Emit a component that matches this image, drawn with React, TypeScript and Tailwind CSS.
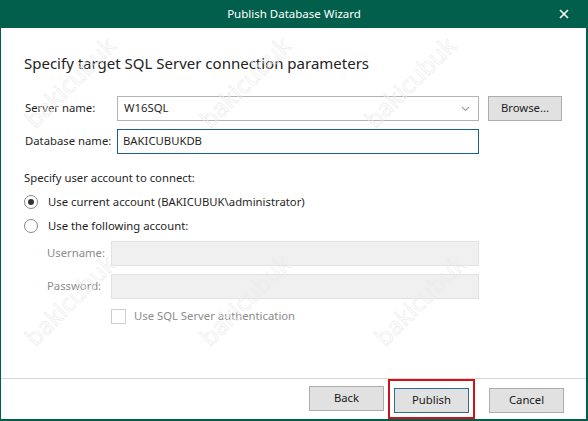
import type { FC } from 'react'

const font = { fontFamily: '"Segoe UI", "Noto Sans", sans-serif' }

/** Faint diagonal watermark positions (center points) */
const marks = [
  [70, 82], [245, 82], [410, 82],
  [70, 300], [245, 300], [420, 300],
]

const Watermark: FC<{ x: number, y: number }> = ({ x, y }) => (
  <span
    className="pointer-events-none absolute -translate-x-1/2 -translate-y-1/2 -rotate-45 select-none whitespace-nowrap text-[24px] text-transparent [-webkit-text-stroke:0.6px_#ebebeb]"
    style={{ left: x, top: y }}
  >
    bakicubuk
  </span>
)

const Radio: FC<{ checked?: boolean }> = ({ checked }) => (
  <span className="flex size-[14px] items-center justify-center rounded-full border border-[#8a8a8a] bg-white">
    {checked && <span className="size-[6px] rounded-full bg-[#333]" />}
  </span>
)

const DialogButton: FC<{ label: string, primary?: boolean }> = ({ label, primary }) => (
  <button
    className={
      primary
        ? 'h-[25px] w-[75px] border border-[#2f6d95] bg-[#e1e1e1] text-[11.3px] text-[#1a1a1a]'
        : 'h-[25px] w-[75px] border border-[#adadad] bg-[#e1e1e1] text-[11.3px] text-[#1a1a1a]'
    }
  >
    {label}
  </button>
)

const App: FC = () => {
  return (
    <div className="relative h-[421px] w-[588px] overflow-hidden bg-[#015f4b]" style={font}>
      {/* Title bar */}
      <div className="relative flex h-[28px] items-center justify-center text-[11.5px] text-white">
        <span>Publish Database Wizard</span>
        <svg className="absolute left-[559px] top-[9px]" width="10" height="10" viewBox="0 0 10 10">
          <path d="M1 1L9 9M9 1L1 9" stroke="white" strokeWidth="1.6" />
        </svg>
      </div>

      {/* Body */}
      <div className="ml-px mr-[2px] flex h-[391px] flex-col bg-white">
        <div className="flex flex-1 flex-col pl-[23px] pr-[23px] pt-[24px]">
          <h1 className="text-[15px] leading-[22px] text-[#222]">
            Specify target SQL Server connection parameters
          </h1>

          {/* Server name */}
          <div className="mt-[22px] flex h-[25px] items-center text-[11.3px] text-[#1f1f1f]">
            <span className="w-[93px] shrink-0 pl-px">Server name:</span>
            <div className="flex h-full w-[362px] items-center justify-between border border-[#b4b4b4] pl-[6px] pr-[8px]">
              <span>W16SQL</span>
              <svg width="9" height="6" viewBox="0 0 9 6">
                <path d="M1 1L4.5 4.5L8 1" fill="none" stroke="#a6a6a6" strokeWidth="1.2" />
              </svg>
            </div>
            <button className="ml-[9px] h-full w-[74px] border border-[#adadad] bg-[#e1e1e1] text-[11.3px]">
              Browse...
            </button>
          </div>

          {/* Database name */}
          <div className="mt-[8px] flex h-[25px] items-center text-[11.3px] text-[#1f1f1f]">
            <span className="w-[93px] shrink-0 pl-px">Database name:</span>
            <div className="flex h-full w-[362px] items-center border border-[#1d5f8c] pl-[5px]">
              BAKICUBUKDB
            </div>
          </div>

          {/* Account */}
          <div className="mt-[15px] text-[11.3px] leading-[18px] text-[#1f1f1f]">
            Specify user account to connect:
          </div>
          <div className="mt-[6px] flex h-[18px] items-center gap-[10px] text-[11.3px] text-[#1f1f1f]">
            <Radio checked />
            <span>Use current account (BAKICUBUK\administrator)</span>
          </div>
          <div className="mt-[6px] flex h-[18px] items-center gap-[10px] text-[11.3px] text-[#1f1f1f]">
            <Radio />
            <span>Use the following account:</span>
          </div>

          <div className="ml-[23px] mt-[6px] flex flex-col gap-[8px] text-[11.3px] text-[#8c8c8c]">
            <div className="flex h-[25px] items-center">
              <span className="w-[64px] shrink-0">Username:</span>
              <div className="h-full w-[368px] border border-[#e2e2e2] bg-[#f0f0f0]" />
            </div>
            <div className="flex h-[25px] items-center">
              <span className="w-[64px] shrink-0">Password:</span>
              <div className="h-full w-[368px] border border-[#e2e2e2] bg-[#f0f0f0]" />
            </div>
            <div className="ml-[64px] mt-[1px] flex items-center gap-[8px]">
              <span className="size-[15px] border border-[#cfcfcf] bg-white" />
              <span>Use SQL Server authentication</span>
            </div>
          </div>
        </div>

        {/* Footer */}
        <div className="h-[41px] border-t border-[#d6d6d6]">
          <div className="flex h-full items-start justify-end pr-[22px] pt-[7px]">
            <DialogButton label="Back" />
            <div className="relative ml-[10px]">
              <DialogButton label="Publish" primary />
              <span className="absolute -left-[6px] -right-[6px] -top-[7px] -bottom-[6px] border-2 border-[#d0121b]" />
            </div>
            <div className="ml-[20px]">
              <DialogButton label="Cancel" />
            </div>
          </div>
        </div>
      </div>

      {marks.map(([x, y]) => (
        <Watermark key={`${x}-${y}`} x={x} y={y} />
      ))}
    </div>
  )
}

export default App
